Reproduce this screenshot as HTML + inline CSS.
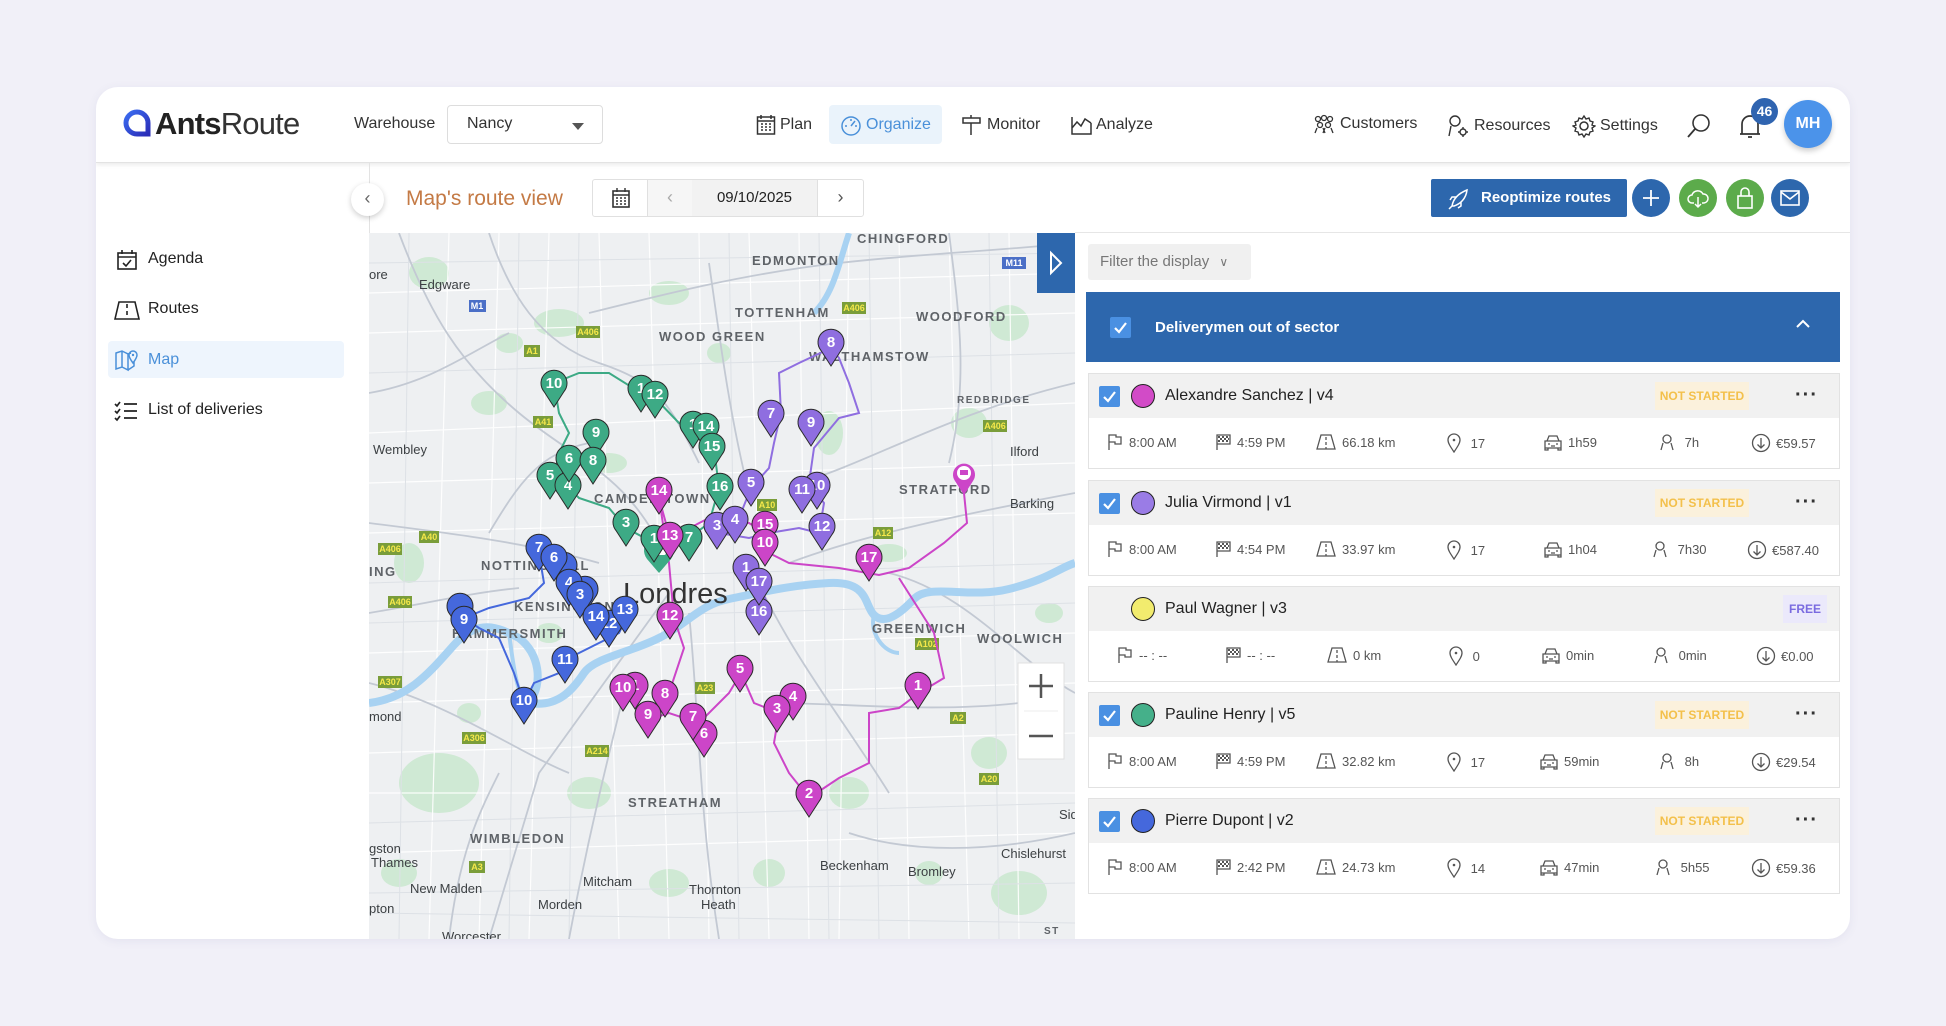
<!DOCTYPE html>
<html><head><meta charset="utf-8">
<style>
*{box-sizing:border-box;margin:0;padding:0}
body{width:1946px;height:1026px;background:#f1f0f8;font-family:"Liberation Sans",sans-serif;position:relative;overflow:hidden;color:#222}
.a{position:absolute}
.card{position:absolute;left:96px;top:87px;width:1754px;height:852px;background:#fff;border-radius:22px;box-shadow:0 2px 10px rgba(80,80,140,.08);overflow:hidden}
.hdr{position:absolute;left:0;top:0;width:1754px;height:76px;border-bottom:1px solid #e3e3e3;box-shadow:0 2px 4px rgba(0,0,0,.08)}
.nav{position:absolute;top:27px;font-size:16px;color:#333;display:flex;align-items:center;gap:4px}
.side{font-size:16px;color:#222}
.stat{position:absolute;font-size:13px;color:#555;display:flex;align-items:center;gap:5px;white-space:nowrap}
.rc{position:absolute;left:1088px;width:752px;height:96px;border:1px solid #e2e2e2;background:#fff}
.rc .h{position:absolute;left:0;top:0;right:0;height:44px;background:#f1f1f1}
.cb{position:absolute;left:10px;top:12px;width:21px;height:21px;background:#4a90e2;border-radius:2px}
.dot{position:absolute;left:42px;top:10px;width:24px;height:24px;border-radius:50%;border:1.5px solid #222}
.nm{position:absolute;left:76px;top:13px;font-size:16px;color:#222}
.ns{position:absolute;left:566px;top:8px;width:94px;height:28px;background:#fbf1dc;color:#f3c04b;font-size:12px;font-weight:bold;line-height:28px;text-align:center}
.dots{position:absolute;left:706px;top:10px;font-size:20px;font-weight:bold;color:#333;letter-spacing:1px}
svg text{font-family:"Liberation Sans",sans-serif}
.mk text{fill:#fff;font-size:15px;font-weight:bold;text-anchor:middle}
.lb{fill:#5f6368;font-size:13px;font-weight:bold;letter-spacing:1.5px}
.lt{fill:#3c4043;font-size:13px}
.rb rect{fill:#7a9d3a}
.rb text{fill:#f5e84a;font-size:9px;font-weight:bold;text-anchor:middle}
</style></head><body>
<svg width="0" height="0" style="position:absolute">
<defs>
<path id="p" d="M0,24 L-10,8.5 A13,13 0 1,1 10,8.5 Z" stroke="#2a2a2a" stroke-width="1"/>
<symbol id="flag" viewBox="0 0 18 18"><path d="M3 17V2h7v2h5v7H9V9H3" fill="none" stroke="#555" stroke-width="1.3"/></symbol>
<symbol id="fin" viewBox="0 0 18 18"><path d="M3 17V2h13v9H3" fill="none" stroke="#555" stroke-width="1.3"/><path d="M4 3h2v2H4zM8 3h2v2H8zM12 3h2v2h-2zM6 5h2v2H6zM10 5h2v2h-2zM14 5h1v2h-1zM4 7h2v2H4zM8 7h2v2H8zM12 7h2v2h-2z" fill="#555"/></symbol>
<symbol id="road" viewBox="0 0 20 18"><path d="M1 16L5 2h10l4 14zM10 4v3M10 9v3M10 14v2" fill="none" stroke="#555" stroke-width="1.3"/></symbol>
<symbol id="pin" viewBox="0 0 16 20"><path d="M8 19C4 13 2 10 2 7a6 6 0 0 1 12 0c0 3-2 6-6 12z" fill="none" stroke="#555" stroke-width="1.3"/><circle cx="8" cy="7" r="1.3" fill="#555"/></symbol>
<symbol id="car" viewBox="0 0 20 18"><path d="M2 8h16v7H2zM4 8l2-5h8l2 5M2 15v2h3v-2M15 15v2h3v-2M5 11h2M13 11h2M8 13h4" fill="none" stroke="#555" stroke-width="1.3"/></symbol>
<symbol id="per" viewBox="0 0 18 18"><circle cx="9" cy="6" r="4" fill="none" stroke="#555" stroke-width="1.3"/><path d="M3 17l2-7M15 17l-2-7" fill="none" stroke="#555" stroke-width="1.3"/></symbol>
<symbol id="eur" viewBox="0 0 20 20"><circle cx="10" cy="10" r="8.5" fill="none" stroke="#555" stroke-width="1.3"/><path d="M10 5v10M6.5 11.5L10 15l3.5-3.5" fill="none" stroke="#555" stroke-width="1.3"/></symbol>
<symbol id="chk" viewBox="0 0 21 21"><path d="M5 11l4 4 7-9" fill="none" stroke="#fff" stroke-width="2.2"/></symbol>
</defs></svg>

<div class="card">
 <div class="hdr">
  <svg class="a" style="left:26px;top:21px" width="30" height="30" viewBox="0 0 30 30"><defs><linearGradient id="lg" x1="0" y1="0" x2="1" y2="1"><stop offset="0" stop-color="#3b6cf0"/><stop offset="1" stop-color="#2a2db8"/></linearGradient></defs><path d="M15 4a11 11 0 1 0 0 22h11V15A11 11 0 0 0 15 4z" fill="none" stroke="url(#lg)" stroke-width="5"/></svg>
  <div class="a" style="left:59px;top:19px;font-size:31px;color:#222;letter-spacing:-0.8px"><b>Ants</b><span style="font-weight:normal;color:#333">Route</span></div>
  <div class="a" style="left:258px;top:28px;font-size:16px;color:#333">Warehouse</div>
  <div class="a" style="left:351px;top:18px;width:156px;height:39px;border:1px solid #ddd;border-radius:4px;font-size:16px;color:#333;padding:9px 0 0 19px">Nancy<span class="a" style="right:18px;top:17px;width:0;height:0;border-left:6px solid transparent;border-right:6px solid transparent;border-top:7px solid #555"></span></div>
  <div class="nav" style="left:660px"><svg width="20" height="22" viewBox="0 0 20 22"><rect x="1.5" y="3" width="17" height="17" fill="none" stroke="#333" stroke-width="1.5"/><path d="M1.5 7h17M5 1v4M15 1v4M5 10h2M9 10h2M13 10h2M5 13h2M9 13h2M13 13h2M5 16h2M9 16h2M13 16h2" stroke="#333" stroke-width="1.5"/></svg>Plan</div>
  <div class="a" style="left:733px;top:18px;width:113px;height:39px;background:#eaf3fb;border-radius:4px"></div>
  <div class="nav" style="left:744px;color:#4a90d9"><svg width="22" height="22" viewBox="0 0 22 22"><circle cx="11" cy="12" r="9" fill="none" stroke="#4a90d9" stroke-width="1.5"/><path d="M11 12l4-5M5 12h2M11 5v2M15 12h2" stroke="#4a90d9" stroke-width="1.5"/></svg>Organize</div>
  <div class="nav" style="left:865px"><svg width="22" height="22" viewBox="0 0 22 22"><path d="M2 4h17v5H2zM10 1v3M10 9v12" fill="none" stroke="#333" stroke-width="1.5"/></svg>Monitor</div>
  <div class="nav" style="left:974px"><svg width="22" height="22" viewBox="0 0 22 22"><path d="M2 3v17h19M2 14l5-6 4 4 4-7 6 4M2 20h19V9" fill="none" stroke="#333" stroke-width="1.5"/></svg>Analyze</div>
  <div class="nav" style="left:1216px"><svg width="24" height="20" viewBox="0 0 24 20"><circle cx="6" cy="5" r="2.5" fill="none" stroke="#333" stroke-width="1.3"/><circle cx="12" cy="4" r="2.5" fill="none" stroke="#333" stroke-width="1.3"/><circle cx="18" cy="5" r="2.5" fill="none" stroke="#333" stroke-width="1.3"/><circle cx="8" cy="11" r="2.5" fill="none" stroke="#333" stroke-width="1.3"/><circle cx="16" cy="11" r="2.5" fill="none" stroke="#333" stroke-width="1.3"/><path d="M3 19l2-5M13 19l-2-5M11 19l2-5M21 19l-2-5" stroke="#333" stroke-width="1.3"/></svg>Customers</div>
  <div class="nav" style="left:1350px"><svg width="24" height="24" viewBox="0 0 24 24"><circle cx="9" cy="7" r="5" fill="none" stroke="#333" stroke-width="1.4"/><path d="M3 22l2-10" stroke="#333" stroke-width="1.4"/><circle cx="17" cy="18" r="3" fill="none" stroke="#333" stroke-width="1.4"/><path d="M17 13v2M17 21v2M12 18h2M20 18h2" stroke="#333" stroke-width="1.4"/></svg>Resources</div>
  <div class="nav" style="left:1476px"><svg width="24" height="24" viewBox="0 0 24 24"><circle cx="12" cy="12" r="4" fill="none" stroke="#333" stroke-width="1.5"/><path d="M12 2l2 3 3-1 1 3 3 1-1 3 3 1-3 2 1 3-3 1-1 3-3-1-2 3-2-3-3 1-1-3-3-1 1-3-3-2 3-1-1-3 3-1 1-3 3 1z" fill="none" stroke="#333" stroke-width="1.4"/></svg>Settings</div>
  <svg class="a" style="left:1590px;top:26px" width="26" height="26" viewBox="0 0 26 26"><circle cx="15" cy="10" r="8" fill="none" stroke="#333" stroke-width="1.6"/><path d="M9 16l-7 8" stroke="#333" stroke-width="1.8"/></svg>
  <svg class="a" style="left:1643px;top:27px" width="22" height="26" viewBox="0 0 22 26"><path d="M3 20V10a8 8 0 0 1 16 0v10zM1 20h20M9 23h4" fill="none" stroke="#333" stroke-width="1.7"/></svg>
  <div class="a" style="left:1655px;top:11px;width:27px;height:27px;border-radius:50%;background:#2f64b0;color:#fff;font-size:14px;font-weight:bold;text-align:center;line-height:27px">46</div>
  <div class="a" style="left:1688px;top:13px;width:48px;height:48px;border-radius:50%;background:#4b93ea;color:#fff;font-size:16px;font-weight:bold;text-align:center;line-height:48px;box-shadow:0 3px 6px rgba(0,0,0,.2)">MH</div>
 </div>

 <div class="a" style="left:273px;top:76px;width:1px;height:776px;background:#e3e3e3"></div>
 <svg class="a" style="left:20px;top:162px" width="22" height="22" viewBox="0 0 22 22"><rect x="2" y="4" width="18" height="16" fill="none" stroke="#222" stroke-width="1.6"/><path d="M2 8h18M6 1v4M16 1v4M7 14l3 3 5-6" fill="none" stroke="#222" stroke-width="1.6"/></svg>
 <div class="a side" style="left:52px;top:163px">Agenda</div>
 <svg class="a" style="left:18px;top:212px" width="26" height="22" viewBox="0 0 26 22"><path d="M1 20L5 3h16l4 17zM13 5v4M13 12v4" fill="none" stroke="#222" stroke-width="1.6"/></svg>
 <div class="a side" style="left:52px;top:213px">Routes</div>
 <div class="a" style="left:12px;top:254px;width:236px;height:37px;background:#eef5fd;border-radius:4px"></div>
 <svg class="a" style="left:18px;top:261px" width="26" height="24" viewBox="0 0 26 24"><path d="M2 5l6-2 6 3v16l-6-3-6 2zM8 3v16M14 6l3-1M20 14v4l-6 4" fill="none" stroke="#4a90d9" stroke-width="1.5"/><path d="M19 15c-3-4-4-6-4-8a4 4 0 0 1 8 0c0 2-1 4-4 8z" fill="none" stroke="#4a90d9" stroke-width="1.5"/><circle cx="19" cy="7" r="1.2" fill="#4a90d9"/></svg>
 <div class="a side" style="left:52px;top:264px;color:#4a90d9">Map</div>
 <svg class="a" style="left:18px;top:313px" width="24" height="22" viewBox="0 0 24 22"><path d="M1 4l2 2 3-4M1 11l2 2 3-4M1 18l2 2 3-4M10 4h13M10 11h13M10 18h13" fill="none" stroke="#222" stroke-width="1.7"/></svg>
 <div class="a side" style="left:52px;top:314px">List of deliveries</div>

 <div class="a" style="left:255px;top:96px;width:33px;height:33px;border-radius:50%;background:#fff;box-shadow:0 2px 6px rgba(0,0,0,.2);text-align:center;line-height:31px;color:#666;font-size:18px">&#8249;</div>
 <div class="a" style="left:310px;top:100px;font-size:21px;color:#c47a45">Map's route view</div>
 <div class="a" style="left:496px;top:92px;width:272px;height:38px;border:1px solid #e0e0e0;border-radius:3px;background:#fff"></div>
 <svg class="a" style="left:516px;top:101px" width="18" height="20" viewBox="0 0 18 20"><rect x="1" y="3" width="16" height="16" fill="none" stroke="#333" stroke-width="1.6"/><path d="M1 7h16M5 0v4M13 0v4M4 10h2M8 10h2M12 10h2M4 13h2M8 13h2M12 13h2M4 16h2M8 16h2M12 16h2" stroke="#333" stroke-width="1.4"/></svg>
 <div class="a" style="left:551px;top:93px;width:1px;height:36px;background:#e0e0e0"></div>
 <div class="a" style="left:552px;top:93px;width:44px;height:36px;background:#f6f6f6;color:#aaa;text-align:center;line-height:35px;font-size:18px">&#8249;</div>
 <div class="a" style="left:596px;top:93px;width:125px;height:36px;background:#f2f2f2;text-align:center;line-height:36px;font-size:15px;color:#222">09/10/2025</div>
 <div class="a" style="left:721px;top:93px;width:1px;height:36px;background:#e0e0e0"></div>
 <div class="a" style="left:722px;top:93px;width:45px;height:36px;text-align:center;line-height:35px;font-size:18px;color:#555">&#8250;</div>

 <div class="a" style="left:1335px;top:92px;width:196px;height:38px;background:#2d67ad;border-radius:2px;color:#fff;font-weight:bold;font-size:15px;line-height:38px;padding-left:50px">Reoptimize routes</div>
 <svg class="a" style="left:1352px;top:101px" width="22" height="22" viewBox="0 0 22 22"><path d="M4 18c1-6 5-12 15-16-1 9-7 14-13 16zM4 18l-3 3M8 9H4l-2 3M13 14v4l-3 2" fill="none" stroke="#fff" stroke-width="1.5"/></svg>
 <div class="a" style="left:1536px;top:92px;width:38px;height:38px;border-radius:50%;background:#2d67ad"></div>
 <svg class="a" style="left:1545px;top:101px" width="20" height="20"><path d="M10 2v16M2 10h16" stroke="#fff" stroke-width="1.8"/></svg>
 <div class="a" style="left:1583px;top:92px;width:38px;height:38px;border-radius:50%;background:#5cab4b"></div>
 <svg class="a" style="left:1591px;top:100px" width="22" height="22" viewBox="0 0 22 22"><path d="M7 16H5a4 4 0 0 1 0-8 6 6 0 0 1 11-1 4.5 4.5 0 0 1 1 9h-2M11 10v10M8 17l3 3 3-3" fill="none" stroke="#fff" stroke-width="1.5"/></svg>
 <div class="a" style="left:1630px;top:92px;width:38px;height:38px;border-radius:50%;background:#5cab4b"></div>
 <svg class="a" style="left:1640px;top:99px" width="18" height="24" viewBox="0 0 18 24"><rect x="2" y="10" width="14" height="12" fill="none" stroke="#fff" stroke-width="1.6"/><path d="M5 10V6a4 4 0 0 1 8 0v4" fill="none" stroke="#fff" stroke-width="1.6"/></svg>
 <div class="a" style="left:1675px;top:92px;width:38px;height:38px;border-radius:50%;background:#2d67ad"></div>
 <svg class="a" style="left:1684px;top:102px" width="20" height="18" viewBox="0 0 20 18"><rect x="1" y="2" width="18" height="14" fill="none" stroke="#fff" stroke-width="1.6"/><path d="M1 3l9 7 9-7" fill="none" stroke="#fff" stroke-width="1.6"/></svg>
 <div class="a" style="left:979px;top:145px;width:775px;height:1px;background:#e6e6e6"></div>

 <div class="a" style="left:992px;top:157px;width:163px;height:36px;background:#f0f0f0;border-radius:3px;color:#777;font-size:15px;line-height:36px;padding-left:12px">Filter the display <span style="font-size:12px;margin-left:6px">&#8744;</span></div>
 <div class="a" style="left:990px;top:205px;width:754px;height:70px;background:#2d67ad"></div>
 <div class="a" style="left:1014px;top:230px;width:21px;height:21px;background:#4a90e2;border-radius:2px"><svg width="21" height="21"><use href="#chk"/></svg></div>
 <div class="a" style="left:1059px;top:232px;color:#fff;font-weight:bold;font-size:15px">Deliverymen out of sector</div>
 <svg class="a" style="left:1700px;top:232px" width="14" height="10"><path d="M1 8l6-6 6 6" fill="none" stroke="#fff" stroke-width="2"/></svg>
</div>

<div class="rc" style="top:373px"><div class="h"></div><div class="cb"><svg width="21" height="21"><use href="#chk"/></svg></div><div class="dot" style="background:#d24bc7"></div><div class="nm">Alexandre Sanchez | v4</div><div class="ns">NOT STARTED</div><div class="dots">···</div></div>
<div class="rc" style="top:480px"><div class="h"></div><div class="cb"><svg width="21" height="21"><use href="#chk"/></svg></div><div class="dot" style="background:#9a7ce6"></div><div class="nm">Julia Virmond | v1</div><div class="ns">NOT STARTED</div><div class="dots">···</div></div>
<div class="rc" style="top:586px"><div class="h"></div><div class="dot" style="background:#f2ec6e"></div><div class="nm">Paul Wagner | v3</div><div class="ns" style="left:694px;width:44px;background:#ebe9fb;color:#7a6be0">FREE</div></div>
<div class="rc" style="top:692px"><div class="h"></div><div class="cb"><svg width="21" height="21"><use href="#chk"/></svg></div><div class="dot" style="background:#45b08a"></div><div class="nm">Pauline Henry | v5</div><div class="ns">NOT STARTED</div><div class="dots">···</div></div>
<div class="rc" style="top:798px"><div class="h"></div><div class="cb"><svg width="21" height="21"><use href="#chk"/></svg></div><div class="dot" style="background:#4568dc"></div><div class="nm">Pierre Dupont | v2</div><div class="ns">NOT STARTED</div><div class="dots">···</div></div>

<div class="stat" style="left:1106px;top:433px"><svg width="18" height="18"><use href="#flag"/></svg>8:00 AM</div>
<div class="stat" style="left:1214px;top:433px"><svg width="18" height="18"><use href="#fin"/></svg>4:59 PM</div>
<div class="stat" style="left:1315px;top:433px"><svg width="22" height="18"><use href="#road"/></svg>66.18 km</div>
<div class="stat" style="left:1446px;top:433px"><svg width="16" height="20"><use href="#pin"/></svg>&nbsp;17</div>
<div class="stat" style="left:1543px;top:433px"><svg width="20" height="18"><use href="#car"/></svg>1h59</div>
<div class="stat" style="left:1658px;top:433px"><svg width="18" height="18"><use href="#per"/></svg>&nbsp;7h</div>
<div class="stat" style="left:1751px;top:433px"><svg width="20" height="20"><use href="#eur"/></svg>€59.57</div>

<div class="stat" style="left:1106px;top:540px"><svg width="18" height="18"><use href="#flag"/></svg>8:00 AM</div>
<div class="stat" style="left:1214px;top:540px"><svg width="18" height="18"><use href="#fin"/></svg>4:54 PM</div>
<div class="stat" style="left:1315px;top:540px"><svg width="22" height="18"><use href="#road"/></svg>33.97 km</div>
<div class="stat" style="left:1446px;top:540px"><svg width="16" height="20"><use href="#pin"/></svg>&nbsp;17</div>
<div class="stat" style="left:1543px;top:540px"><svg width="20" height="18"><use href="#car"/></svg>1h04</div>
<div class="stat" style="left:1651px;top:540px"><svg width="18" height="18"><use href="#per"/></svg>&nbsp;7h30</div>
<div class="stat" style="left:1747px;top:540px"><svg width="20" height="20"><use href="#eur"/></svg>€587.40</div>

<div class="stat" style="left:1116px;top:646px"><svg width="18" height="18"><use href="#flag"/></svg>-- : --</div>
<div class="stat" style="left:1224px;top:646px"><svg width="18" height="18"><use href="#fin"/></svg>-- : --</div>
<div class="stat" style="left:1326px;top:646px"><svg width="22" height="18"><use href="#road"/></svg>0 km</div>
<div class="stat" style="left:1448px;top:646px"><svg width="16" height="20"><use href="#pin"/></svg>&nbsp;0</div>
<div class="stat" style="left:1541px;top:646px"><svg width="20" height="18"><use href="#car"/></svg>0min</div>
<div class="stat" style="left:1652px;top:646px"><svg width="18" height="18"><use href="#per"/></svg>&nbsp;0min</div>
<div class="stat" style="left:1756px;top:646px"><svg width="20" height="20"><use href="#eur"/></svg>€0.00</div>

<div class="stat" style="left:1106px;top:752px"><svg width="18" height="18"><use href="#flag"/></svg>8:00 AM</div>
<div class="stat" style="left:1214px;top:752px"><svg width="18" height="18"><use href="#fin"/></svg>4:59 PM</div>
<div class="stat" style="left:1315px;top:752px"><svg width="22" height="18"><use href="#road"/></svg>32.82 km</div>
<div class="stat" style="left:1446px;top:752px"><svg width="16" height="20"><use href="#pin"/></svg>&nbsp;17</div>
<div class="stat" style="left:1539px;top:752px"><svg width="20" height="18"><use href="#car"/></svg>59min</div>
<div class="stat" style="left:1658px;top:752px"><svg width="18" height="18"><use href="#per"/></svg>&nbsp;8h</div>
<div class="stat" style="left:1751px;top:752px"><svg width="20" height="20"><use href="#eur"/></svg>€29.54</div>

<div class="stat" style="left:1106px;top:858px"><svg width="18" height="18"><use href="#flag"/></svg>8:00 AM</div>
<div class="stat" style="left:1214px;top:858px"><svg width="18" height="18"><use href="#fin"/></svg>2:42 PM</div>
<div class="stat" style="left:1315px;top:858px"><svg width="22" height="18"><use href="#road"/></svg>24.73 km</div>
<div class="stat" style="left:1446px;top:858px"><svg width="16" height="20"><use href="#pin"/></svg>&nbsp;14</div>
<div class="stat" style="left:1539px;top:858px"><svg width="20" height="18"><use href="#car"/></svg>47min</div>
<div class="stat" style="left:1654px;top:858px"><svg width="18" height="18"><use href="#per"/></svg>&nbsp;5h55</div>
<div class="stat" style="left:1751px;top:858px"><svg width="20" height="20"><use href="#eur"/></svg>€59.36</div>

<svg class="a" style="left:369px;top:233px" width="706" height="706" viewBox="0 0 706 706">
<rect width="706" height="706" fill="#eef0f2"/>
<g fill="#cfe9d4">
<ellipse cx="190" cy="90" rx="25" ry="14"/><ellipse cx="120" cy="170" rx="18" ry="12"/><ellipse cx="300" cy="60" rx="20" ry="12"/><ellipse cx="240" cy="230" rx="18" ry="10"/><ellipse cx="640" cy="90" rx="20" ry="18"/><ellipse cx="600" cy="190" rx="18" ry="15"/><ellipse cx="70" cy="550" rx="40" ry="30"/><ellipse cx="220" cy="560" rx="22" ry="16"/><ellipse cx="480" cy="560" rx="20" ry="16"/><ellipse cx="620" cy="520" rx="18" ry="16"/><ellipse cx="650" cy="660" rx="28" ry="22"/><ellipse cx="300" cy="650" rx="20" ry="14"/><ellipse cx="520" cy="320" rx="18" ry="9"/><ellipse cx="40" cy="330" rx="15" ry="20"/><ellipse cx="180" cy="400" rx="14" ry="10"/><ellipse cx="400" cy="640" rx="16" ry="14"/><ellipse cx="560" cy="640" rx="14" ry="12"/><ellipse cx="60" cy="40" rx="20" ry="16"/><ellipse cx="460" cy="200" rx="14" ry="22"/><ellipse cx="140" cy="110" rx="14" ry="10"/><ellipse cx="350" cy="120" rx="12" ry="10"/><ellipse cx="100" cy="480" rx="12" ry="10"/><ellipse cx="30" cy="640" rx="18" ry="14"/><ellipse cx="680" cy="380" rx="14" ry="10"/>
</g>
<g fill="none" stroke="#ffffff" stroke-width="1.2" opacity=".9">
<path d="M0 100L706 80M0 200L706 170M0 300L706 280M0 420L706 400M0 520L706 500M0 620L706 600M80 0L60 706M180 0L160 706M280 0L300 706M380 0L400 706M480 0L470 706M580 0L600 706M0 60L706 40M0 250L706 230M0 470L706 450M0 560L706 560M130 0L110 706M230 0L250 706M330 0L340 706M430 0L440 706M530 0L540 706M640 0L650 706"/>
</g>
<g fill="none" stroke="#dde1e6" stroke-width="1">
<path d="M0 140L706 120M0 350L706 330M0 590L706 570M0 660L706 650M40 0L30 706M210 0L200 706M360 0L370 706M500 0L510 706M620 0L630 706M0 30L706 20M0 390L706 370M0 680L706 690M150 0L140 706M450 0L460 706"/>
</g>
<g fill="none" stroke="#c3c9d3" stroke-width="1.8">
<path d="M30 0C60 80 90 130 150 180S260 240 300 330"/><path d="M120 0C140 60 170 110 230 130S300 170 330 230"/><path d="M220 80C300 60 380 40 470 30S600 20 706 10"/><path d="M0 290C80 300 160 310 230 330"/><path d="M0 380C60 370 100 360 150 355"/><path d="M300 360L170 540L120 706"/><path d="M320 380C330 480 330 580 350 706"/><path d="M380 330C420 420 470 480 520 560"/><path d="M420 330C500 300 600 280 706 260"/><path d="M430 250C500 230 580 180 706 150"/><path d="M520 340C600 360 650 430 706 460"/><path d="M0 450C80 470 150 520 200 540"/><path d="M340 30C350 100 360 180 380 260"/><path d="M260 440C240 520 220 600 200 706"/><path d="M400 470C480 470 560 480 650 470"/><path d="M580 0C590 80 600 150 580 230"/><path d="M120 300C150 250 170 220 220 210"/><path d="M80 706C90 620 110 580 130 540"/><path d="M0 160C60 150 100 120 140 100"/><path d="M480 600C540 620 620 620 706 600"/>
</g>
<path d="M0 470C40 465 60 440 85 412S130 395 150 405C170 420 175 450 160 470C190 475 205 455 215 440S260 420 290 405S330 372 360 366S420 352 460 350S495 372 505 382S530 382 545 366S600 366 640 356S690 335 706 330" fill="none" stroke="#a8d2f2" stroke-width="8"/>
<path d="M505 382C500 400 515 420 530 420" fill="none" stroke="#a8d2f2" stroke-width="4"/>
<path d="M480 0C470 30 465 60 445 80" fill="none" stroke="#a8d2f2" stroke-width="6"/>
<path d="M140 400C145 440 150 470 160 470" fill="none" stroke="#a8d2f2" stroke-width="4"/>
<g class="lb">
<text x="488" y="10">CHINGFORD</text><text x="383" y="32">EDMONTON</text><text x="366" y="84">TOTTENHAM</text><text x="290" y="108">WOOD GREEN</text><text x="547" y="88">WOODFORD</text><text x="440" y="128">WALTHAMSTOW</text><text x="530" y="261">STRATFORD</text><text x="225" y="270">CAMDEN TOWN</text><text x="112" y="337">NOTTING HILL</text><text x="0" y="343">ING</text><text x="145" y="378">KENSINGTON</text><text x="83" y="405">HAMMERSMITH</text><text x="503" y="400">GREENWICH</text><text x="608" y="410">WOOLWICH</text><text x="259" y="574">STREATHAM</text><text x="101" y="610">WIMBLEDON</text>
<text x="588" y="170" style="font-size:10px">REDBRIDGE</text><text x="675" y="701" style="font-size:10px">ST</text>
</g>
<g class="lt">
<text x="0" y="46">ore</text><text x="50" y="56">Edgware</text><text x="4" y="221">Wembley</text><text x="641" y="223">Ilford</text><text x="641" y="275">Barking</text><text x="0" y="488">mond</text><text x="0" y="620">gston</text><text x="2" y="634">Thames</text><text x="632" y="625">Chislehurst</text><text x="451" y="637">Beckenham</text><text x="539" y="643">Bromley</text><text x="41" y="660">New Malden</text><text x="214" y="653">Mitcham</text><text x="320" y="661">Thornton</text><text x="332" y="676">Heath</text><text x="169" y="676">Morden</text><text x="73" y="708">Worcester</text><text x="0" y="680">pton</text><text x="690" y="586">Sid</text>
</g>
<text x="254" y="370" style="font-size:29px;fill:#333">Londres</text>
<g class="rb">
<rect x="100" y="67" width="17" height="12" style="fill:#4b6fc7"/><text x="108" y="76" style="fill:#fff">M1</text>
<rect x="633" y="24" width="24" height="12" style="fill:#4b6fc7"/><text x="645" y="33" style="fill:#fff">M11</text>
<rect x="207" y="93" width="24" height="12"/><text x="219" y="102">A406</text>
<rect x="473" y="69" width="24" height="12"/><text x="485" y="78">A406</text>
<rect x="155" y="112" width="16" height="12"/><text x="163" y="121">A1</text>
<rect x="164" y="183" width="20" height="12"/><text x="174" y="192">A41</text>
<rect x="50" y="298" width="20" height="12"/><text x="60" y="307">A40</text>
<rect x="9" y="310" width="24" height="12"/><text x="21" y="319">A406</text>
<rect x="19" y="363" width="24" height="12"/><text x="31" y="372">A406</text>
<rect x="9" y="443" width="24" height="12"/><text x="21" y="452">A307</text>
<rect x="93" y="499" width="24" height="12"/><text x="105" y="508">A306</text>
<rect x="216" y="512" width="24" height="12"/><text x="228" y="521">A214</text>
<rect x="326" y="449" width="20" height="12"/><text x="336" y="458">A23</text>
<rect x="504" y="294" width="20" height="12"/><text x="514" y="303">A12</text>
<rect x="388" y="266" width="20" height="12"/><text x="398" y="275">A10</text>
<rect x="614" y="187" width="24" height="12"/><text x="626" y="196">A406</text>
<rect x="546" y="405" width="24" height="12"/><text x="558" y="414">A102</text>
<rect x="581" y="479" width="16" height="12"/><text x="589" y="488">A2</text>
<rect x="610" y="540" width="20" height="12"/><text x="620" y="549">A20</text>
<rect x="100" y="628" width="16" height="12"/><text x="108" y="637">A3</text>
</g>
<path d="M185 150L210 140L240 140L272 160L286 165L310 190L330 200L345 215L350 255L340 290L320 305L300 315L285 310L257 295L240 275L210 265L200 255L185 245L190 220L200 200L190 180Z" fill="none" stroke="#3daa85" stroke-width="2"/>
<path d="M462 115L430 130L410 140L412 180L405 210L400 235L382 255L370 285L350 300L380 305L400 300L430 295L450 300L455 270L440 250L445 215L470 185L490 180L480 150L470 125ZM390 350L400 375L390 385" fill="none" stroke="#8f6ee0" stroke-width="2"/>
<path d="M595 260L598 290L575 310L540 335L510 342L470 335L420 330L400 320L396 300L380 290L340 285L301 305L290 265L300 330L305 385L315 415L300 460L285 485L300 480L330 490L360 460L372 440L385 470L410 480L405 510L420 540L440 565L470 545L500 530L500 480L530 475L550 460L575 445L565 400L530 345" fill="none" stroke="#cc45c8" stroke-width="2"/>
<path d="M95 385L120 375L160 365L175 350L170 320L190 330L205 360L230 385L260 380L250 400L230 410L200 425L190 440L165 450L155 470L145 440L130 405L110 395Z" fill="none" stroke="#4568dc" stroke-width="2"/>
<g transform="translate(290,318)"><path d="M0,22 L-12,8 A15,15 0 1,1 12,8 Z" fill="#3daa85"/><rect x="-7" y="-4" width="14" height="8" rx="2" fill="#fff"/></g>
<g transform="translate(595,240)"><path d="M0,22 L-9,8 A11,11 0 1,1 9,8 Z" fill="#cc45c8"/><circle r="7" fill="#fff"/><rect x="-4" y="-3" width="8" height="5" fill="#cc45c8"/></g>
<g class="mk">
<g fill="#3daa85">
<g transform="translate(185,150)"><use href="#p"/><text y="5">10</text></g>
<g transform="translate(272,155)"><use href="#p"/><text y="5">1</text></g>
<g transform="translate(286,161)"><use href="#p"/><text y="5">12</text></g>
<g transform="translate(227,199)"><use href="#p"/><text y="5">9</text></g>
<g transform="translate(181,242)"><use href="#p"/><text y="5">5</text></g>
<g transform="translate(199,252)"><use href="#p"/><text y="5">4</text></g>
<g transform="translate(200,225)"><use href="#p"/><text y="5">6</text></g>
<g transform="translate(224,227)"><use href="#p"/><text y="5">8</text></g>
<g transform="translate(324,191)"><use href="#p"/><text y="5">1</text></g>
<g transform="translate(337,193)"><use href="#p"/><text y="5">14</text></g>
<g transform="translate(343,213)"><use href="#p"/><text y="5">15</text></g>
<g transform="translate(351,253)"><use href="#p"/><text y="5">16</text></g>
<g transform="translate(257,289)"><use href="#p"/><text y="5">3</text></g>
<g transform="translate(285,305)"><use href="#p"/><text y="5">1</text></g>
<g transform="translate(320,304)"><use href="#p"/><text y="5">7</text></g>
</g>
<g fill="#8f6ee0">
<g transform="translate(462,109)"><use href="#p"/><text y="5">8</text></g>
<g transform="translate(402,180)"><use href="#p"/><text y="5">7</text></g>
<g transform="translate(442,189)"><use href="#p"/><text y="5">9</text></g>
<g transform="translate(382,249)"><use href="#p"/><text y="5">5</text></g>
<g transform="translate(448,252)"><use href="#p"/><text y="5">10</text></g>
<g transform="translate(433,256)"><use href="#p"/><text y="5">11</text></g>
<g transform="translate(453,293)"><use href="#p"/><text y="5">12</text></g>
<g transform="translate(348,292)"><use href="#p"/><text y="5">3</text></g>
<g transform="translate(366,286)"><use href="#p"/><text y="5">4</text></g>
<g transform="translate(377,334)"><use href="#p"/><text y="5">1</text></g>
<g transform="translate(390,378)"><use href="#p"/><text y="5">16</text></g>
<g transform="translate(390,348)"><use href="#p"/><text y="5">17</text></g>
</g>
<g fill="#cc45c8">
<g transform="translate(290,257)"><use href="#p"/><text y="5">14</text></g>
<g transform="translate(301,302)"><use href="#p"/><text y="5">13</text></g>
<g transform="translate(396,291)"><use href="#p"/><text y="5">15</text></g>
<g transform="translate(396,309)"><use href="#p"/><text y="5">10</text></g>
<g transform="translate(500,324)"><use href="#p"/><text y="5">17</text></g>
<g transform="translate(301,382)"><use href="#p"/><text y="5">12</text></g>
<g transform="translate(371,435)"><use href="#p"/><text y="5">5</text></g>
<g transform="translate(424,463)"><use href="#p"/><text y="5">4</text></g>
<g transform="translate(408,475)"><use href="#p"/><text y="5">3</text></g>
<g transform="translate(549,452)"><use href="#p"/><text y="5">1</text></g>
<g transform="translate(266,452)"><use href="#p"/><text y="5">1</text></g>
<g transform="translate(254,454)"><use href="#p"/><text y="5">10</text></g>
<g transform="translate(296,460)"><use href="#p"/><text y="5">8</text></g>
<g transform="translate(279,481)"><use href="#p"/><text y="5">9</text></g>
<g transform="translate(335,500)"><use href="#p"/><text y="5">6</text></g>
<g transform="translate(324,483)"><use href="#p"/><text y="5">7</text></g>
<g transform="translate(440,560)"><use href="#p"/><text y="5">2</text></g>
</g>
<g fill="#4568dc">
<g transform="translate(91,373)"><use href="#p"/></g>
<g transform="translate(95,386)"><use href="#p"/><text y="5">9</text></g>
<g transform="translate(170,314)"><use href="#p"/><text y="5">7</text></g>
<g transform="translate(195,332)"><use href="#p"/></g>
<g transform="translate(185,324)"><use href="#p"/><text y="5">6</text></g>
<g transform="translate(216,356)"><use href="#p"/></g>
<g transform="translate(200,349)"><use href="#p"/><text y="5">4</text></g>
<g transform="translate(211,361)"><use href="#p"/><text y="5">3</text></g>
<g transform="translate(240,390)"><use href="#p"/><text y="5">12</text></g>
<g transform="translate(227,383)"><use href="#p"/><text y="5">14</text></g>
<g transform="translate(256,376)"><use href="#p"/><text y="5">13</text></g>
<g transform="translate(196,426)"><use href="#p"/><text y="5">11</text></g>
<g transform="translate(155,467)"><use href="#p"/><text y="5">10</text></g>
</g>
</g>
<rect x="649" y="430" width="46" height="96" fill="#fff" stroke="#e0e0e0"/>
<path d="M660 453h24M672 441v24M660 503h24" stroke="#555" stroke-width="2.5"/>
<line x1="655" y1="478" x2="689" y2="478" stroke="#eee"/>
<rect x="668" y="0" width="38" height="60" fill="#2d67ad"/>
<path d="M682 20l10 10-10 10z" fill="none" stroke="#fff" stroke-width="2"/>
</svg>
</body></html>
